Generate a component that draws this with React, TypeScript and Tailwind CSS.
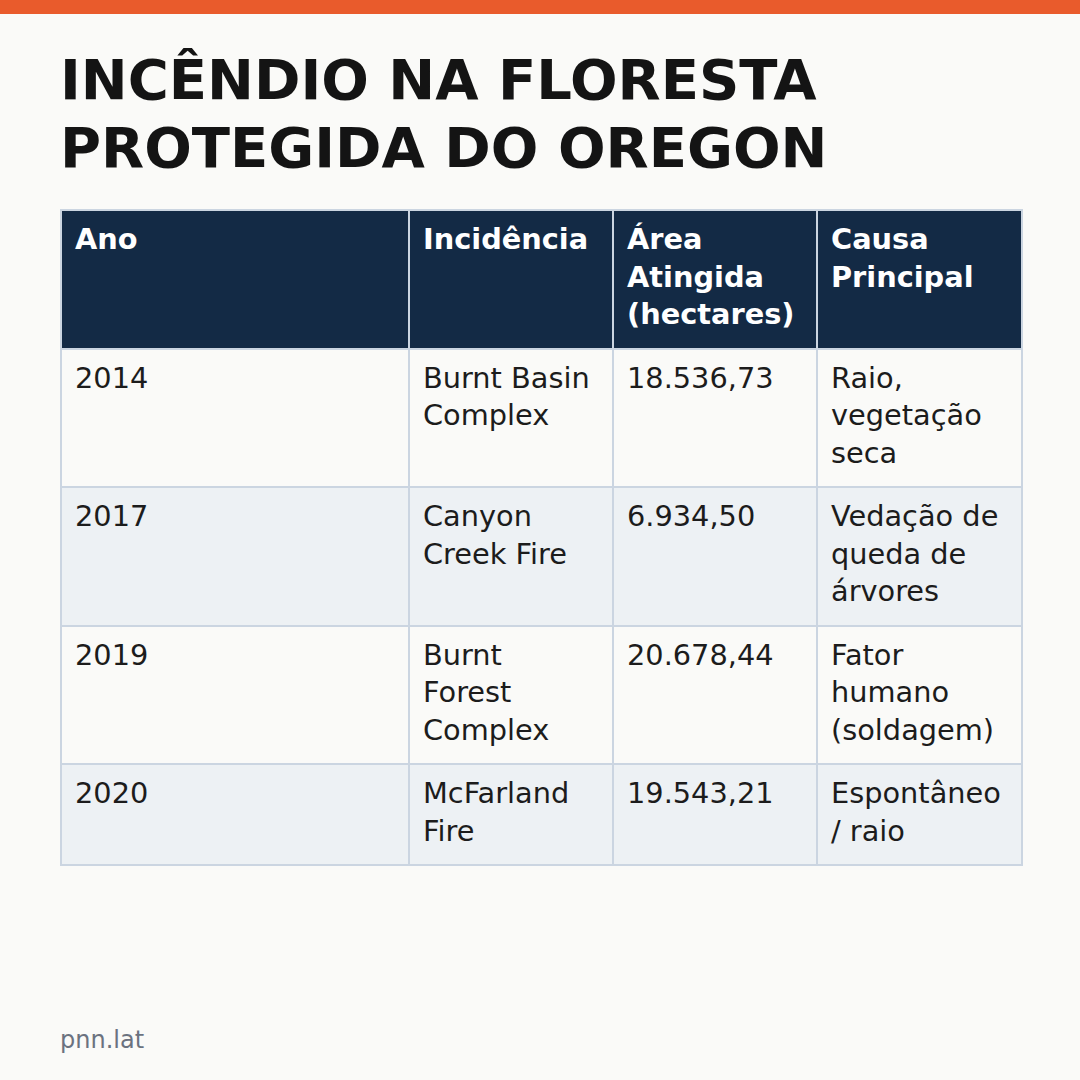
import React from "react";

const rows = [
  { ano: "2014", nome: "Burnt Basin Complex", area: "18.536,73", causa: "Raio, vegetação seca" },
  { ano: "2017", nome: "Canyon Creek Fire", area: "6.934,50", causa: "Vedação de queda de árvores" },
  { ano: "2019", nome: "Burnt Forest Complex", area: "20.678,44", causa: "Fator humano (soldagem)" },
  { ano: "2020", nome: "McFarland Fire", area: "19.543,21", causa: "Espontâneo / raio" },
];

export default function App() {
  return (
    <div
      className="w-[1080px] h-[1080px] bg-[#fafaf8] flex flex-col"
      style={{ fontFamily: '"DejaVu Sans", Verdana, sans-serif' }}
    >
      <div className="h-[14px] bg-[#e95b2c] shrink-0" />

      <div className="px-[60px] pt-[32px] flex-1 flex flex-col">
        <h1 className="text-[56px] leading-[68px] font-bold text-[#141414]">
          INCÊNDIO NA FLORESTA
          <br />
          PROTEGIDA DO OREGON
        </h1>

        <table className="mt-[27px] w-[961px] border-collapse text-[28.8px] leading-[37.5px] table-fixed">
          <colgroup>
            <col className="w-[348px]" />
            <col className="w-[204px]" />
            <col className="w-[204px]" />
            <col className="w-[205px]" />
          </colgroup>
          <thead>
            <tr className="bg-[#132a45] text-white">
              {["Ano", "Incidência", "Área Atingida (hectares)", "Causa Principal"].map((h) => (
                <th
                  key={h}
                  className="border-2 border-[#cbd5e1] pl-[13px] pr-[15px] pt-[10px] pb-[14px] text-left align-top font-bold"
                >
                  {h}
                </th>
              ))}
            </tr>
          </thead>
          <tbody>
            {rows.map((r, i) => (
              <tr key={r.ano} className={i % 2 === 1 ? "bg-[#edf1f4]" : "bg-[#fafaf8]"}>
                {[r.ano, r.nome, r.area, r.causa].map((c, j) => (
                  <td
                    key={j}
                    className="border-2 border-[#cbd5e1] pl-[13px] pr-[15px] pt-[10px] pb-[14px] align-top text-[#1c1c1c]"
                  >
                    {c}
                  </td>
                ))}
              </tr>
            ))}
          </tbody>
        </table>

        <div className="mt-auto pb-[24px] text-[24px] leading-[32px] text-[#6b7280]">pnn.lat</div>
      </div>
    </div>
  );
}
